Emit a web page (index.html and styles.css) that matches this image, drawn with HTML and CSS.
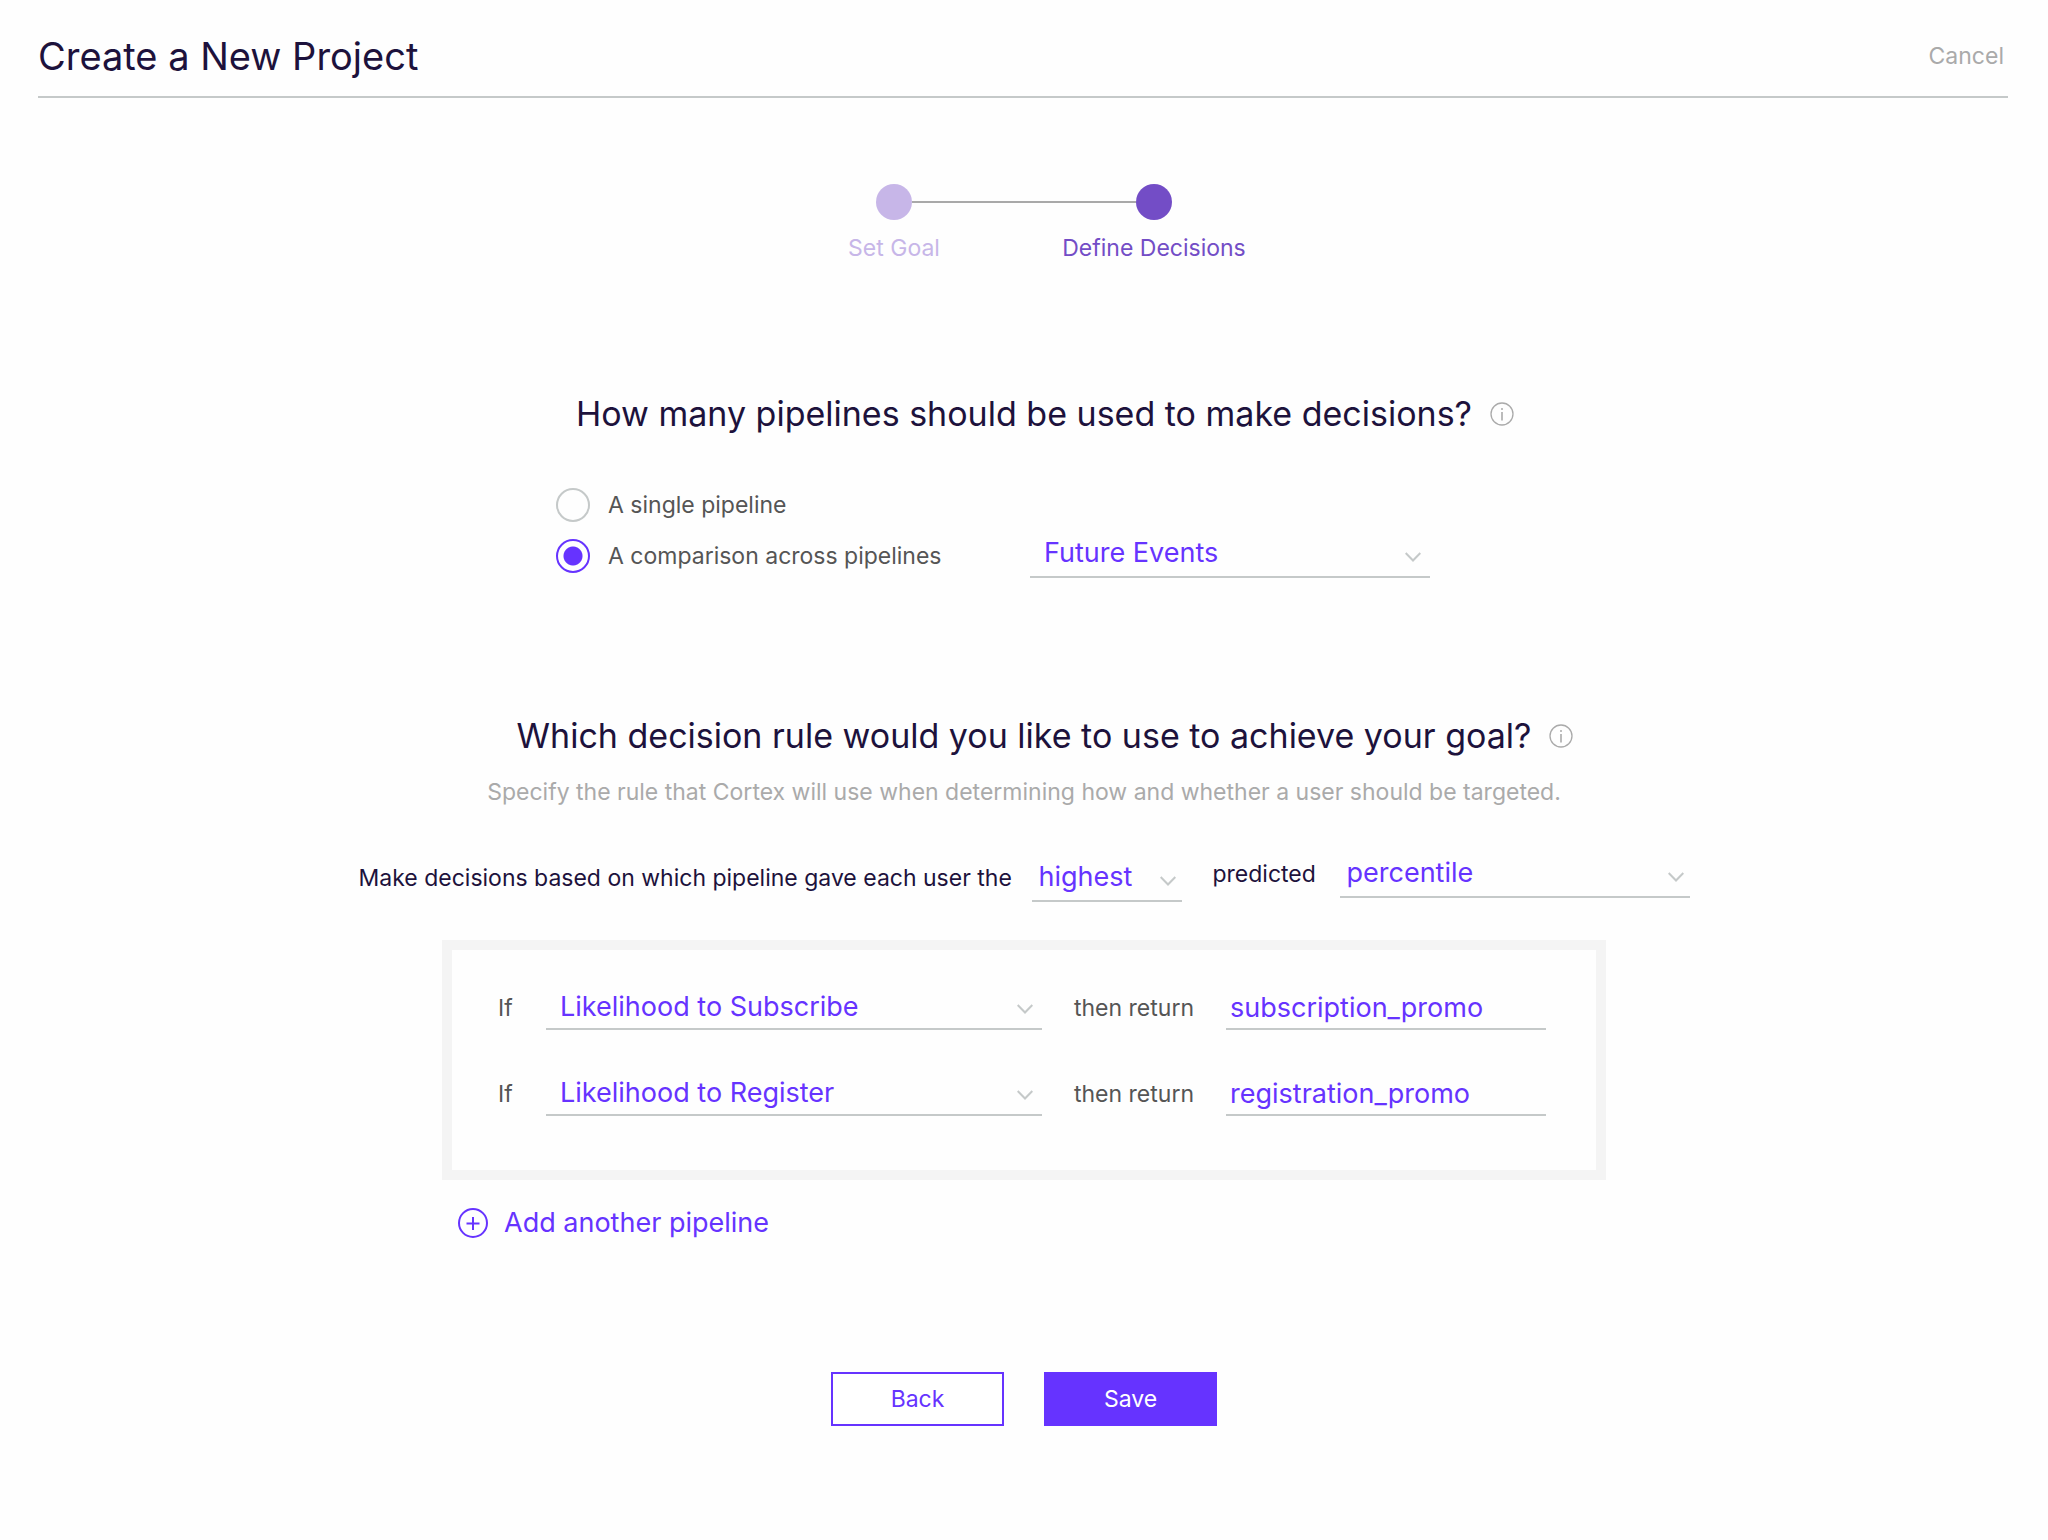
FILE: index.html
```
<!DOCTYPE html>
<html lang="en">
<head>
  <meta charset="UTF-8" />
  <meta name="viewport" content="width=device-width, initial-scale=1.0"/>
  <title>Create a New Project</title>
  <link rel="stylesheet" href="styles.css">
</head>
<body>

  <header class="header">
    <h1>Create a New Project</h1>
    <a href="#" class="cancel">Cancel</a>
  </header>

  <form class="wizard">
    <ol class="steps">
      <li class="step done">
        <span class="dot"></span>
        <span class="line"></span>
        <span class="step-label">Set Goal</span>
      </li>
      <li class="step current" aria-current="step">
        <span class="line"></span>
        <span class="dot"></span>
        <span class="step-label">Define Decisions</span>
      </li>
    </ol>

    <section class="pipelines">
      <div class="heading">
        <h2>How many pipelines should be used to make decisions?</h2>
        <button type="button" class="info" aria-label="More info">
          <svg width="24" height="24" viewBox="0 0 24 24" fill="none" stroke="#aaa">
            <circle cx="12" cy="12" r="11" stroke-width="1.3"/>
            <path d="M12 10v8.5" stroke-width="1.6"/>
            <circle cx="12" cy="7" r="1" fill="#aaa" stroke="none"/>
          </svg>
        </button>
      </div>
      <div class="options">
        <label class="option"><input type="radio" name="mode" value="single" /> A single pipeline</label>
        <label class="option"><input type="radio" name="mode" value="compare" checked /> A comparison across pipelines</label>
        <select class="field" aria-label="Pipeline type">
          <option>Future Events</option>
        </select>
      </div>
    </section>

    <section class="rule">
      <div class="heading">
        <h2>Which decision rule would you like to use to achieve your goal?</h2>
        <button type="button" class="info" aria-label="More info">
          <svg width="24" height="24" viewBox="0 0 24 24" fill="none" stroke="#aaa">
            <circle cx="12" cy="12" r="11" stroke-width="1.3"/>
            <path d="M12 10v8.5" stroke-width="1.6"/>
            <circle cx="12" cy="7" r="1" fill="#aaa" stroke="none"/>
          </svg>
        </button>
      </div>
      <p class="hint">Specify the rule that Cortex will use when determining how and whether a user should be targeted.</p>

      <div class="sentence">
        <div class="rank">
          <label for="rank">Make decisions based on which pipeline gave each user the</label>
          <select id="rank" class="field compact">
            <option>highest</option>
            <option>lowest</option>
          </select>
        </div>
        <div class="metric">
          <label for="metric">predicted</label>
          <select id="metric" class="field compact">
            <option>percentile</option>
          </select>
        </div>
      </div>

      <div class="conditions">
        <div class="condition">
          <label for="if-1">If</label>
          <select id="if-1" class="field">
            <option>Likelihood to Subscribe</option>
            <option>Likelihood to Register</option>
          </select>
          <label for="then-1" class="then">then return</label>
          <input type="text" id="then-1" class="field" value="subscription_promo" />
        </div>
        <div class="condition">
          <label for="if-2">If</label>
          <select id="if-2" class="field">
            <option>Likelihood to Register</option>
            <option>Likelihood to Subscribe</option>
          </select>
          <label for="then-2" class="then">then return</label>
          <input type="text" id="then-2" class="field" value="registration_promo" />
        </div>
      </div>

      <button type="button" class="add">
        <svg width="30" height="30" viewBox="0 0 30 30" fill="none" stroke="currentColor" stroke-width="2">
          <circle cx="15" cy="15" r="14"/>
          <path d="M15 9v13M8.500 15.500h13"/>
        </svg>
        Add another pipeline
      </button>
    </section>

    <div class="actions">
      <button type="button" class="btn">Back</button>
      <button type="submit" class="btn primary">Save</button>
    </div>
  </form>

</body>
</html>
```

FILE: styles.css
```
* {
  box-sizing: border-box;
}
body {
  margin: 0;
  background: #fefefe;
  color: #1d123c;
  font-family: Inter, "Liberation Sans", sans-serif;
  font-size: 23px;
  line-height: 32px;
}
h1, h2, p, ol {
  margin: 0;
  padding: 0;
  font-weight: 400;
}
button, input, select {
  font: inherit;
}
button {
  cursor: pointer;
}

.header {
  display: flex;
  justify-content: space-between;
  align-items: center;
  margin: 0 40px 0 38px;
  padding: 32px 4px 16px 0;
  border-bottom: 2px solid #c5c9c9;
}
h1 {
  font-size: 38px;
  line-height: 48px;
}
.cancel {
  color: #aaa;
  text-decoration: none;
}

.wizard {
  display: flex;
  flex-direction: column;
  align-items: center;
}

/* progress */
.steps {
  display: grid;
  grid-template-columns: 260px 260px;
  margin-top: 86px;
  list-style: none;
}
.step {
  display: grid;
  grid-template-columns: 112px 36px 112px;
  row-gap: 12px;
  align-items: center;
}
.dot {
  grid-column: 2;
  height: 36px;
  border-radius: 50%;
  background: currentColor;
}
.line {
  height: 2px;
  background: #a9a9a9;
}
.step-label {
  grid-column: 1 / -1;
  text-align: center;
}
.done {
  color: #c7b6e8;
}
.current {
  color: #734dc6;
}

/* questions */
.heading {
  display: grid;
  grid-template-columns: 1fr auto 1fr;
  align-items: center;
}
h2 {
  grid-column: 2;
  font-size: 34px;
  line-height: 48px;
}
.info {
  display: flex;
  margin-left: 18px;
  padding: 0;
  border: 0;
  background: none;
  justify-self: start;
}
.pipelines {
  margin-top: 126px;
}
.options {
  display: grid;
  grid-template-columns: 474px 400px;
  gap: 12px 0;
  width: 936px;
  margin: 50px auto 0;
  align-items: center;
  color: #555;
}
.option {
  display: flex;
  align-items: center;
  gap: 18px;
  grid-column: 1;
}
.option input {
  appearance: none;
  width: 34px;
  height: 34px;
  margin: 0;
  border: 2px solid #c5c9c9;
  border-radius: 50%;
}
.option input:checked {
  border-color: #6633ff;
  background: radial-gradient(circle, #6633ff 9px, transparent 10px);
}

/* underlined selects and inputs */
.field {
  width: 100%;
  height: 44px;
  padding: 0 40px 4px 14px;
  border: 0;
  border-bottom: 2px solid #c5c9c9;
  border-radius: 0;
  background: none;
  color: #6633ff;
  font-size: 27px;
  outline: none;
}
select.field {
  appearance: none;
  background: url("data:image/svg+xml,%3Csvg xmlns='http://www.w3.org/2000/svg' width='16' height='10' fill='none' stroke='%23c5c9c9' stroke-width='2'%3E%3Cpath d='M.7 1l7.300 7.500L15.300 1'/%3E%3C/svg%3E") no-repeat right 9px top 18px;
}
select.compact {
  padding-left: 7px;
  background-position: right 6px top 18px;
}

.rule {
  width: 1332px;
  margin-top: 134px;
}
.hint {
  margin-top: 16px;
  color: #aaa;
  text-align: center;
}
.sentence {
  display: flex;
  justify-content: center;
  align-items: flex-end;
  margin-top: 46px;
}
.sentence label {
  padding-bottom: 4px;
}
.rank, .metric {
  display: grid;
  align-items: center;
}
.rank {
  grid-template-columns: 673px 150px;
}
.metric {
  grid-template-columns: 127px 350px;
  margin-left: 31px;
  padding-bottom: 4px;
}

.conditions {
  display: grid;
  gap: 42px;
  width: 1164px;
  margin: 38px auto 0;
  padding: 36px 46px 54px;
  border: 10px solid #f4f4f4;
  color: #555;
}
.condition {
  display: grid;
  grid-template-columns: 48px 496px 184px 320px;
  align-items: center;
}
.condition .then {
  padding-left: 32px;
}
.condition .field {
  padding-bottom: 0;
}
.condition input.field {
  padding-left: 4px;
  padding-right: 4px;
}

.add {
  display: flex;
  align-items: center;
  gap: 16px;
  margin: 28px 0 0 100px;
  padding: 0;
  border: 0;
  background: none;
  color: #6633ff;
  font-size: 27px;
  line-height: 30px;
}

.actions {
  display: flex;
  gap: 40px;
  margin: 134px 0 60px;
}
.btn {
  width: 173px;
  height: 54px;
  border: 2px solid #6633ff;
  background: #fff;
  color: #6633ff;
}
.primary {
  background: #6633ff;
  color: #fff;
}
```
